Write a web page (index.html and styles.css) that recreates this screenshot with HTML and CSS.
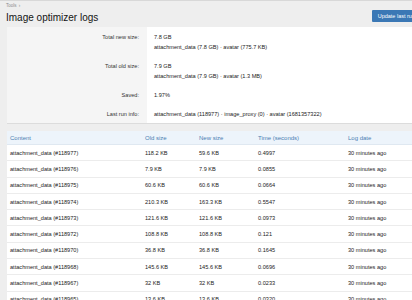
FILE: index.html
```html
<!doctype html>
<html>
<head>
	<meta charset="utf-8">
	<title>Image optimizer logs</title>
	<link rel="stylesheet" href="styles.css">
</head>
<body>
	<div class="page">
		<div class="header">
			<div class="crumbs">Tools <span class="sep">›</span></div>
			<div class="title-row">
				<h1>Image optimizer logs</h1>
				<a class="button" href="#">Update last run</a>
			</div>
		</div>

		<div class="form-block">
			<div class="label">Total new size:</div>
			<div class="value">7.8 GB<br>attachment_data (7.8 GB) · avatar (775.7 KB)</div>
			<div class="label">Total old size:</div>
			<div class="value">7.9 GB<br>attachment_data (7.9 GB) · avatar (1.3 MB)</div>
			<div class="label">Saved:</div>
			<div class="value">1.97%</div>
			<div class="label">Last run info:</div>
			<div class="value">attachment_data (118977) · image_proxy (0) · avatar (1681357322)</div>
		</div>

		<table class="logs">
			<colgroup>
				<col class="c-content">
				<col class="c-old">
				<col class="c-new">
				<col class="c-time">
				<col class="c-date">
			</colgroup>
			<thead>
				<tr>
					<th>Content</th>
					<th>Old size</th>
					<th>New size</th>
					<th>Time (seconds)</th>
					<th>Log date</th>
				</tr>
			</thead>
			<tbody>
				<tr><td>attachment_data (#118977)</td><td>118.2 KB</td><td>59.6 KB</td><td>0.4997</td><td>30 minutes ago</td></tr>
				<tr><td>attachment_data (#118976)</td><td>7.9 KB</td><td>7.9 KB</td><td>0.0855</td><td>30 minutes ago</td></tr>
				<tr><td>attachment_data (#118975)</td><td>60.6 KB</td><td>60.6 KB</td><td>0.0664</td><td>30 minutes ago</td></tr>
				<tr><td>attachment_data (#118974)</td><td>210.3 KB</td><td>163.3 KB</td><td>0.5547</td><td>30 minutes ago</td></tr>
				<tr><td>attachment_data (#118973)</td><td>121.6 KB</td><td>121.6 KB</td><td>0.0973</td><td>30 minutes ago</td></tr>
				<tr><td>attachment_data (#118972)</td><td>108.8 KB</td><td>108.8 KB</td><td>0.121</td><td>30 minutes ago</td></tr>
				<tr><td>attachment_data (#118970)</td><td>36.8 KB</td><td>36.8 KB</td><td>0.1645</td><td>30 minutes ago</td></tr>
				<tr><td>attachment_data (#118968)</td><td>145.6 KB</td><td>145.6 KB</td><td>0.0696</td><td>30 minutes ago</td></tr>
				<tr><td>attachment_data (#118967)</td><td>32 KB</td><td>32 KB</td><td>0.0233</td><td>30 minutes ago</td></tr>
				<tr><td>attachment_data (#118965)</td><td>13.6 KB</td><td>13.6 KB</td><td>0.0320</td><td>30 minutes ago</td></tr>
			</tbody>
		</table>
	</div>
</body>
</html>
```

FILE: styles.css
```css
html, body {
	margin: 0;
	padding: 0;
	overflow: hidden;
}
body {
	background-color: #eeeeee;
	font-family: "Liberation Sans", Arial, sans-serif;
	color: #222;
}
.page {
	width: 424px;
	padding-bottom: 20px;
}
.header {
	border-top: 1px solid #d8d8d8;
	padding: 2px 0 0 6px;
	height: 24px;
}
.crumbs {
	font-size: 4.5px;
	color: #8a8a8a;
	line-height: 6px;
}
.crumbs .sep {
	margin-left: 1px;
}
.title-row {
	display: flex;
	justify-content: space-between;
	align-items: center;
	margin-top: 2px;
}
h1 {
	margin: 0;
	font-size: 10px;
	font-weight: normal;
	line-height: 13px;
	color: #141414;
}
.button {
	background-color: #3b78b5;
	color: #fff;
	font-size: 5.5px;
	text-decoration: none;
	padding: 3px 6px;
	border-radius: 1px;
	margin-top: -3px;
	margin-right: 3px;
}
.form-block {
	display: grid;
	grid-template-columns: 140px 1fr;
	margin-left: 7px;
	background-color: #fff;
	border-bottom: 1px solid #dcdcdc;
	font-size: 5.6px;
	line-height: 10px;
}
.label {
	background-color: #f5f5f5;
	text-align: right;
	padding: 4.5px 8px 4.5px 0;
	color: #333;
}
.value {
	padding: 4.5px 0 4.5px 7px;
	color: #222;
}
.logs {
	margin: 7px 0 0 7px;
	width: 417px;
	border-collapse: collapse;
	table-layout: fixed;
	background-color: #fff;
	font-size: 5.6px;
}
.c-content { width: 135px; }
.c-old { width: 54px; }
.c-new { width: 59px; }
.c-time { width: 90px; }
.c-date { width: 79px; }
.logs th {
	background-color: #edf4fb;
	color: #4b7fb3;
	font-weight: normal;
	text-align: left;
	font-size: 6px;
	height: 13px;
	padding: 0 0 0 3px;
	border-bottom: 1px solid #dfe8f1;
}
.logs td {
	height: 15.3px;
	padding: 0 0 0 3px;
	border-bottom: 1px solid #ececec;
	white-space: nowrap;
}
```
